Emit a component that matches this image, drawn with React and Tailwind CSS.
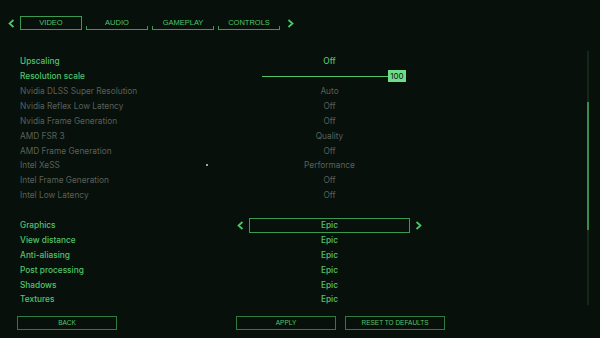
import React from "react";

const G = "text-[#52c46c] font-medium";
const D = "text-[#5a605b]";

function Chevron({ dir = "left", className = "" }) {
  return (
    <svg width="7" height="9" viewBox="0 0 7 9" className={className}>
      {dir === "left" ? (
        <polyline points="5.5,1 1.5,4.5 5.5,8" fill="none" stroke="#52c46c" strokeWidth="1.7" />
      ) : (
        <polyline points="1.5,1 5.5,4.5 1.5,8" fill="none" stroke="#52c46c" strokeWidth="1.7" />
      )}
    </svg>
  );
}

function Tab({ label, active }) {
  if (active) {
    return (
      <div className="w-[62px] h-[14px] border border-[#3b9a52] flex items-center justify-center text-[7.5px] text-[#52c46c]">
        {label}
      </div>
    );
  }
  return (
    <div className="relative w-[62px] h-[14px] border-b border-[#3b9a52] flex items-center justify-center text-[7.5px] text-[#52c46c]">
      {label}
      <span className="absolute left-0 bottom-0 w-px h-[3px] bg-[#3b9a52]" />
      <span className="absolute right-0 bottom-0 w-px h-[3px] bg-[#3b9a52]" />
    </div>
  );
}

function Row({ label, value, dim, children }) {
  return (
    <div className="flex items-center h-[15px]">
      <div className={`w-[219px] ${dim ? D : G}`}>{label}</div>
      <div className="w-[10px]" />
      <div className={`w-[161px] text-center ${dim ? D : G}`}>{children || value}</div>
    </div>
  );
}

export default function App() {
  const upper = [
    ["Nvidia DLSS Super Resolution", "Auto"],
    ["Nvidia Reflex Low Latency", "Off"],
    ["Nvidia Frame Generation", "Off"],
    ["AMD FSR 3", "Quality"],
    ["AMD Frame Generation", "Off"],
    ["Intel XeSS", "Performance"],
    ["Intel Frame Generation", "Off"],
    ["Intel Low Latency", "Off"],
  ];
  const lower = [
    ["View distance", "Epic"],
    ["Anti-aliasing", "Epic"],
    ["Post processing", "Epic"],
    ["Shadows", "Epic"],
    ["Textures", "Epic"],
  ];
  return (
    <div
      className="relative w-[600px] h-[338px] bg-[#07100a] flex flex-col text-[8px] leading-none overflow-hidden"
      style={{ fontFamily: '"Liberation Sans", Arial, sans-serif' }}
    >
      <div className="flex items-center h-[14px] mt-[16px] ml-[8px]">
        <Chevron dir="left" />
        <div className="w-[5px]" />
        <div className="flex gap-[4px]">
          <Tab label="VIDEO" active />
          <Tab label="AUDIO" />
          <Tab label="GAMEPLAY" />
          <Tab label="CONTROLS" />
        </div>
        <div className="w-[7px]" />
        <Chevron dir="right" />
      </div>

      <div className="flex mt-[21px] h-[256px]">
        <div
          className="flex flex-col pl-[20px] pt-[3px] text-[8.3px]"
          style={{ fontFamily: 'Inter, "Liberation Sans", sans-serif' }}
        >
          <Row label="Upscaling" value="Off" />
          <div className="flex items-center h-[15px]">
            <div className={`w-[219px] ${G}`}>Resolution scale</div>
            <div className="w-[23px]" />
            <div className="flex items-center">
              <div className="w-[126px] h-px bg-[#52c46c]" />
              <div className="w-[18px] h-[12px] bg-[#6fdc8a] text-[#07200f] flex items-center justify-center text-[8px]">
                100
              </div>
            </div>
          </div>
          {upper.map(([l, v]) => (
            <Row key={l} label={l} value={v} dim />
          ))}
          <div className="h-[15px]" />
          <div className="flex items-center h-[15px]">
            <div className={`w-[219px] ${G}`}>Graphics</div>
            <div className="w-[10px] flex items-center">
              <Chevron dir="left" className="-ml-[2px]" />
            </div>
            <div className={`w-[161px] h-[15px] border border-[#3b9a52] flex items-center justify-center ${G}`}>
              Epic
            </div>
            <div className="w-[10px] flex items-center justify-end">
              <Chevron dir="right" className="mr-[-2px]" />
            </div>
          </div>
          {lower.map(([l, v]) => (
            <Row key={l} label={l} value={v} />
          ))}
        </div>
        <div className="ml-auto mr-[11px] w-[2px] h-[254px] bg-[#12291a] flex flex-col">
          <div className="h-[51px]" />
          <div className="h-[128px] bg-[#3a8c4f]" />
        </div>
      </div>

      <div className="flex items-center mt-[9px] text-[6.5px] text-[#52c46c]">
        <div className="ml-[17px] w-[100px] h-[14px] border border-[#2f7a43] flex items-center justify-center">BACK</div>
        <div className="ml-[119px] w-[100px] h-[14px] border border-[#2f7a43] flex items-center justify-center">APPLY</div>
        <div className="ml-[9px] w-[100px] h-[14px] border border-[#2f7a43] flex items-center justify-center">RESET TO DEFAULTS</div>
      </div>

      <div className="absolute left-[206px] top-[164px] w-[2px] h-[2px] bg-[#9aa59c]" />
    </div>
  );
}
